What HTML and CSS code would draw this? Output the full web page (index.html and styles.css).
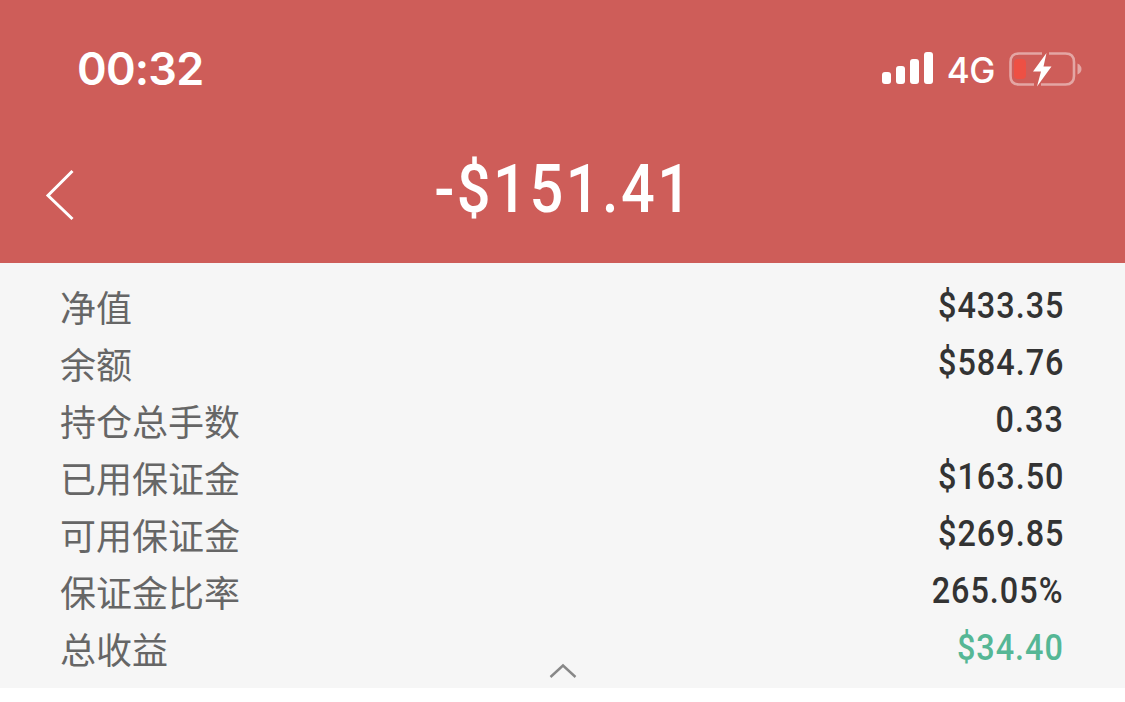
FILE: index.html
```
<!DOCTYPE html>
<html lang="zh-CN">
<head>
  <meta charset="utf-8">
  <title>账户</title>
  <link rel="stylesheet" href="styles.css">
</head>

<body>

  <header class="header">
    <div class="status-bar">
      <span class="time">00:32</span>
      <div class="status-icons">
        <svg class="signal" width="52" height="34" viewBox="0 0 52 34" fill="#fff">
          <rect x="0" y="20" width="9" height="12" rx="3"/>
          <rect x="14" y="14" width="9" height="18" rx="3"/>
          <rect x="28" y="7" width="9" height="25" rx="3"/>
          <rect x="42" y="0" width="9" height="32" rx="3"/>
        </svg>
        <span class="network">4G</span>
        <svg class="battery" width="74" height="36" viewBox="0 0 74 36">
          <path d="M34 2.500H11Q2.500 2.500 2.500 11V25Q2.500 33.500 11 33.500H26M41 2.500H57.500Q66 2.500 66 11V25Q66 33.500 57.500 33.500H33" fill="none" stroke="#fff" stroke-opacity=".45" stroke-width="2.600"/>
          <path d="M69.500 12.500Q73.500 14.500 73.500 18T69.500 23.500Z" fill="#fff" fill-opacity=".45"/>
          <rect x="6" y="8" width="12" height="20" rx="4" fill="#ee5044"/>
          <path d="M38.500 2L25 20.500H33L29 35.500L43.500 15.500H35.500Z" fill="#fff"/>
        </svg>
      </div>
    </div>
    <div class="nav-bar">
      <svg class="back" width="30" height="54" viewBox="0 0 30 54">
        <path d="M27.500 3L3 27.500L27.500 51" fill="none" stroke="#fff" stroke-width="3"/>
      </svg>
      <h1 class="profit">-$151.41</h1>
    </div>
  </header>

  <main class="account">
    <div class="row"><span class="label">净值</span><span class="value">$433.35</span></div>
    <div class="row"><span class="label">余额</span><span class="value">$584.76</span></div>
    <div class="row"><span class="label">持仓总手数</span><span class="value">0.33</span></div>
    <div class="row"><span class="label">已用保证金</span><span class="value">$163.50</span></div>
    <div class="row"><span class="label">可用保证金</span><span class="value">$269.85</span></div>
    <div class="row"><span class="label">保证金比率</span><span class="value">265.05%</span></div>
    <div class="row"><span class="label">总收益</span><span class="value green">$34.40</span></div>
    <svg class="collapse" width="28" height="16" viewBox="0 0 28 16">
      <path d="M1.500 14L14 2.500L26.500 14" fill="none" stroke="#888" stroke-width="2.400"/>
    </svg>
  </main>

</body>
</html>
```
FILE: styles.css
```
body {
  margin: 0;
  background-color: #fff;
  font-family: Roboto, "Noto Sans CJK SC", sans-serif;
}

.header {
  box-sizing: border-box;
  height: 263px;
  background-color: #ce5d59;
  color: #fff;
}

.status-bar {
  display: flex;
  justify-content: space-between;
  align-items: center;
  height: 138px;
  padding: 0 43px 0 77px;
}

.time {
  font: 600 45px/50px Inter, sans-serif;
  letter-spacing: -.8px;
}

.status-icons {
  display: flex;
  align-items: center;
}

.network {
  margin: 2px 13px 0 13px;
  font: 500 35px/40px Inter, sans-serif;
  letter-spacing: -.5px;
}

.nav-bar {
  display: grid;
  grid-template-columns: 30px 1fr 30px;
  align-items: center;
  height: 104px;
  padding: 0 45px;
}

.back {
  margin-top: 10px;
}

.profit {
  margin: 0;
  padding-left: 3px;
  font-size: 66px;
  font-weight: 500;
  line-height: 80px;
  letter-spacing: 2.8px;
  text-align: center;
  transform: scaleX(.9);
}

.account {
  position: relative;
  box-sizing: border-box;
  height: 425px;
  padding: 14px 61px 0 60px;
  background-color: #f6f6f6;
}

.row {
  display: flex;
  justify-content: space-between;
  align-items: center;
  height: 57px;
}

.label {
  padding-top: 9px;
  color: #666;
  font-size: 36px;
  line-height: 54px;
}

.value {
  color: #333;
  font-size: 36px;
  font-weight: 500;
  letter-spacing: 1.1px;
  transform: scaleX(.9);
  transform-origin: right;
}

.green {
  color: #55b795;
}

.collapse {
  position: absolute;
  bottom: 9px;
  left: 549px;
}
```
